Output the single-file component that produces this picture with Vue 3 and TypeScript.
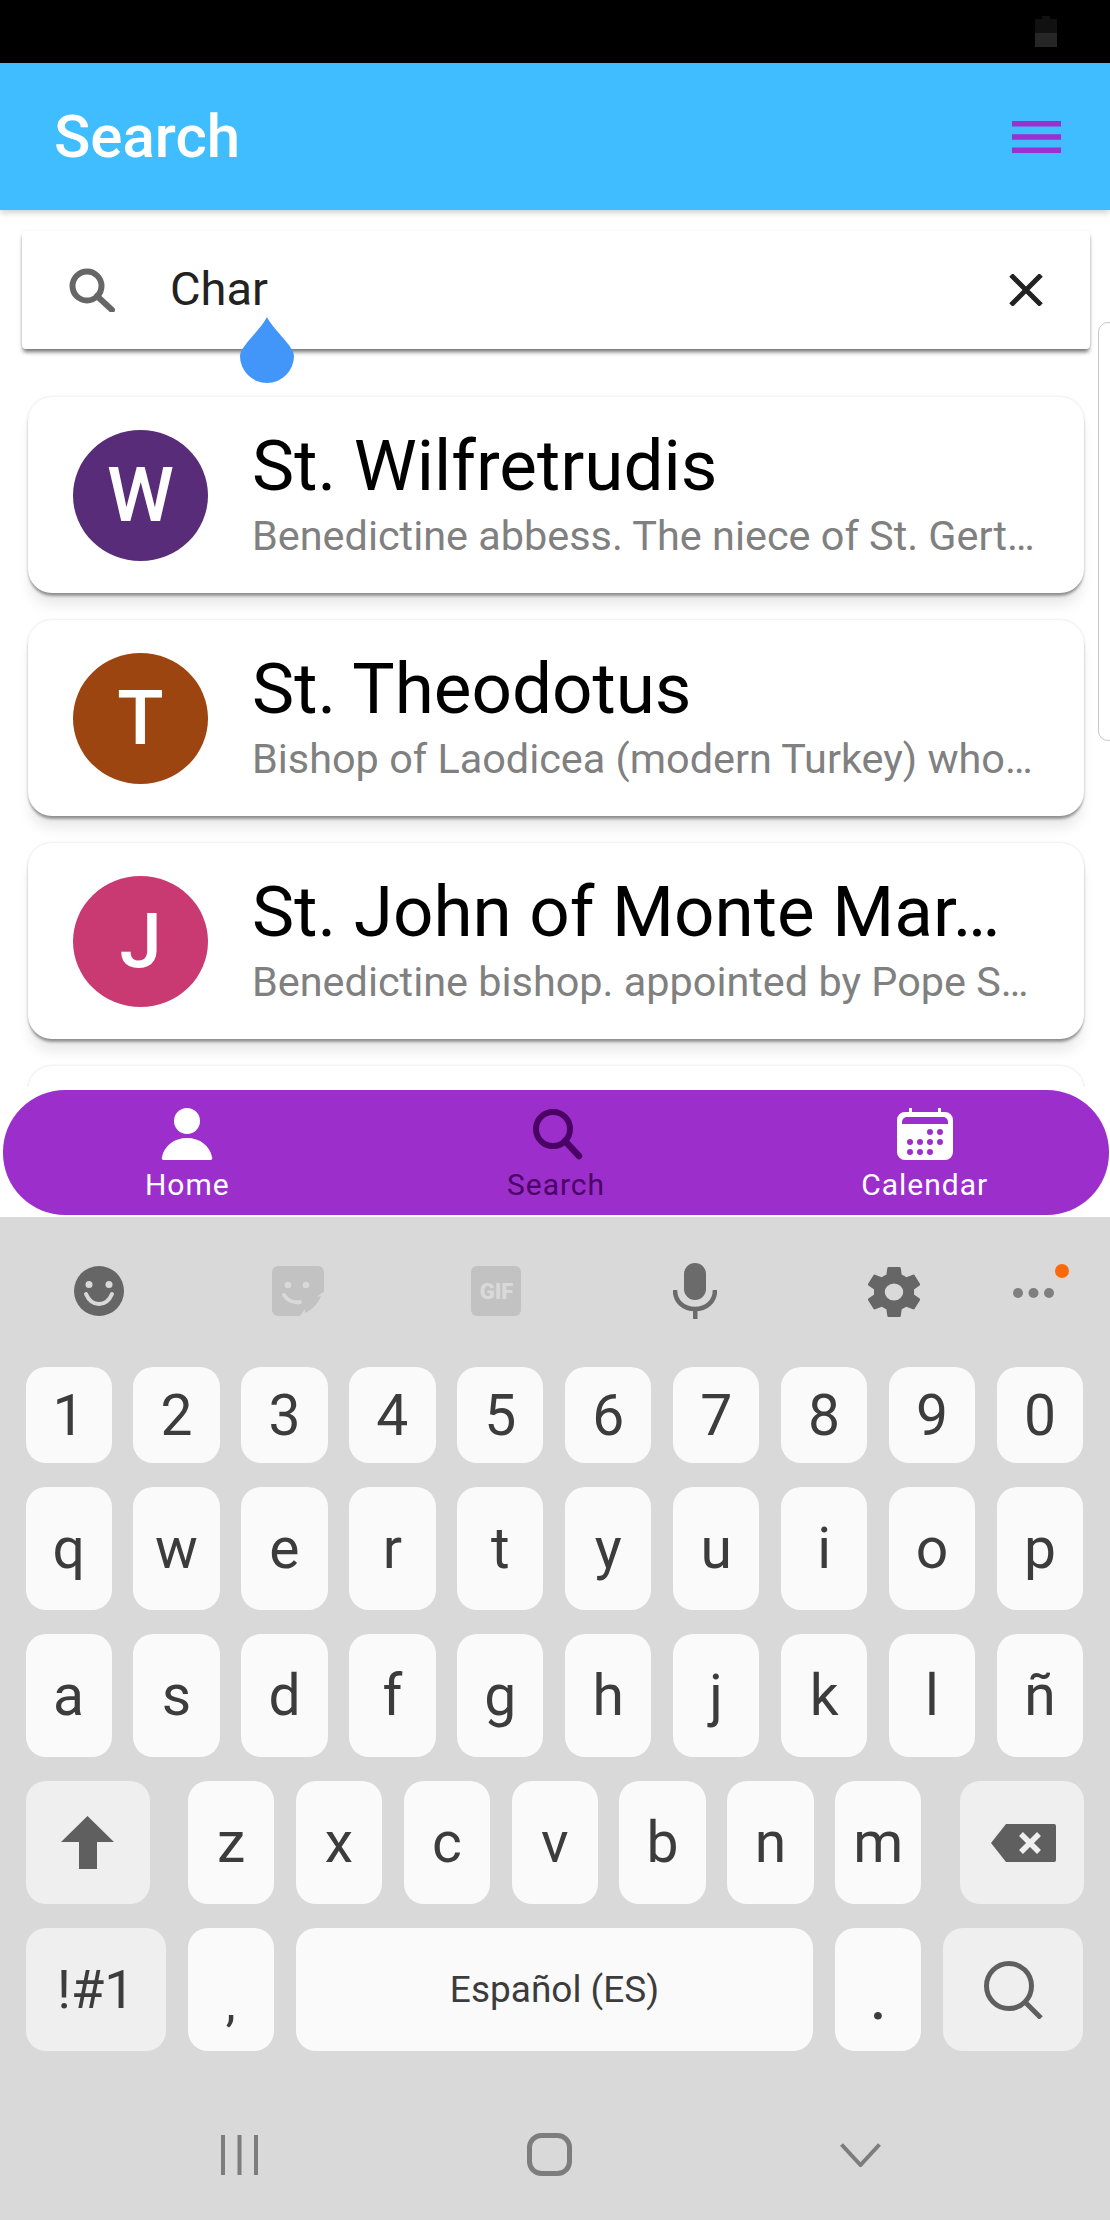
<script setup lang="ts">
interface Saint { letter: string; name: string; text: string; color: string }
const saints: Saint[] = [
  { letter: 'W', name: 'St. Wilfretrudis', text: 'Benedictine abbess. The niece of St. Gert…', color: '#582c78' },
  { letter: 'T', name: 'St. Theodotus', text: 'Bishop of Laodicea (modern Turkey) who…', color: '#9c4510' },
  { letter: 'J', name: 'St. John of Monte Mar…', text: 'Benedictine bishop. appointed by Pope S…', color: '#c93a73' },
]
const digits = '1234567890'.split('')
const row2 = 'qwertyuiop'.split('')
const row3 = 'asdfghjklñ'.split('')
const row4 = 'zxcvbnm'.split('')
const calDots: [number, number][] = [
  [33, 24], [43, 24], [13, 34], [23, 34], [33, 34], [43, 34], [13, 44], [23, 44], [33, 44],
]
</script>

<template>
  <div class="page">
    <div class="status">
      <svg class="battery" viewBox="0 0 22 31"><path d="M7 0h8v3h7v28H0V3h7z" fill="#111" /><rect y="17" width="22" height="14" fill="#262626" /></svg>
    </div>
    <header class="appbar">
      <span class="appbar-title">Search</span>
      <svg class="menu" viewBox="0 0 49 32"><rect y="0" width="49" height="5.500" fill="#9b30d0" /><rect y="13.250" width="49" height="5.500" fill="#9b30d0" /><rect y="26.500" width="49" height="5.500" fill="#9b30d0" /></svg>
    </header>

    <main class="content">
      <div class="searchbox">
        <svg class="s-icon" viewBox="0 0 46 44"><circle cx="18" cy="18" r="14.500" fill="none" stroke="#666" stroke-width="6" /><path d="M28 28l15 14" stroke="#666" stroke-width="6" fill="none" stroke-linecap="round" /></svg>
        <span class="s-text">Char</span>
        <svg class="s-close" viewBox="0 0 36 32"><path d="M3 1l30 30M33 1L3 31" stroke="#222" stroke-width="5" fill="none" /></svg>
      </div>

      <div class="scroll">
        <div class="list">
          <article v-for="s in saints" :key="s.letter" class="card">
            <div class="avatar" :style="{ background: s.color }">{{ s.letter }}</div>
            <div class="card-body">
              <div class="card-title">{{ s.name }}</div>
              <div class="card-sub">{{ s.text }}</div>
            </div>
          </article>
          <article class="card"></article>
        </div>
      </div>

      <svg class="drop" viewBox="0 0 54 66"><path d="M27 0C34 14 54 29 54 39A27 27 0 0 1 0 39C0 29 20 14 27 0Z" fill="#4295f9" /></svg>
      <div class="edge"></div>

      <nav class="nav">
        <div class="nav-item">
          <svg class="nav-icon" viewBox="0 0 56 52"><circle cx="28" cy="13" r="13" fill="#fff" /><path d="M5 52a2 2 0 0 1-2-3C5 38 15 30 28 30s23 8 25 19a2 2 0 0 1-2 3z" fill="#fff" /></svg>
          <span class="nav-label">Home</span>
        </div>
        <div class="nav-item nav-active">
          <svg class="nav-icon" viewBox="0 0 56 52"><circle cx="25" cy="21" r="17" fill="none" stroke="#4b0066" stroke-width="6" /><path d="M37 33l14 15" stroke="#4b0066" stroke-width="6.500" stroke-linecap="round" fill="none" /></svg>
          <span class="nav-label">Search</span>
        </div>
        <div class="nav-item">
          <svg class="nav-icon" viewBox="0 0 56 52">
            <path d="M12 0h3v4h26V0h3v4h4a8 8 0 0 1 8 8v32a8 8 0 0 1-8 8H8a8 8 0 0 1-8-8V12a8 8 0 0 1 8-8h4z" fill="#fff" />
            <path d="M5 14a5 5 0 0 1 5-5h36a5 5 0 0 1 5 5v2H5z" fill="#9c2fcc" />
            <circle v-for="d in calDots" :key="d[0] + '-' + d[1]" :cx="d[0]" :cy="d[1]" r="3" fill="#9c2fcc" />
          </svg>
          <span class="nav-label">Calendar</span>
        </div>
      </nav>
    </main>

    <section class="keyboard">
      <div class="toolbar">
        <div class="slot">
          <svg class="tb-icon" viewBox="0 0 52 50"><circle cx="26" cy="25" r="25" fill="#666" /><circle cx="16" cy="18.500" r="3.500" fill="#d9d9d9" /><circle cx="36" cy="18.500" r="3.500" fill="#d9d9d9" /><path d="M13 28c3 7 8 10 13 10s10-3 13-10" stroke="#d9d9d9" stroke-width="4" stroke-linecap="round" fill="none" /></svg>
        </div>
        <div class="slot">
          <svg class="tb-icon" viewBox="0 0 52 50">
            <path d="M6 0h40a6 6 0 0 1 6 6v20C50 26 36 38 28 50H6a6 6 0 0 1-6-6V6a6 6 0 0 1 6-6z" fill="#c2c2c2" />
            <circle cx="16" cy="19" r="3.300" fill="#d9d9d9" /><circle cx="34" cy="19" r="3.300" fill="#d9d9d9" />
            <path d="M12 29c4 6 9 8 16 7" stroke="#d9d9d9" stroke-width="4" stroke-linecap="round" fill="none" />
            <path d="M33 47c-1-9 6-16 16-17-3 8-8 13-16 17z" fill="#c2c2c2" />
          </svg>
        </div>
        <div class="slot">
          <div class="gif">GIF</div>
        </div>
        <div class="slot">
          <svg class="tb-mic" viewBox="0 0 44 56"><rect x="11" y="0" width="22" height="37" rx="11" fill="#6b6b6b" /><path d="M2 27c0 12 9 19 20 19s20-7 20-19" stroke="#6b6b6b" stroke-width="4.500" fill="none" /><rect x="20" y="45" width="4.500" height="11" fill="#6b6b6b" /></svg>
        </div>
        <div class="slot">
          <svg class="tb-gear" viewBox="2.700 2 18.600 20" preserveAspectRatio="none"><path fill-rule="evenodd" d="M19.140 12.940a7.600 7.600 0 0 0 0-1.880l2.030-1.580a.5.5 0 0 0 .12-.61l-1.920-3.320a.5.5 0 0 0-.59-.22l-2.390.96a7.300 7.300 0 0 0-1.620-.94l-.36-2.540a.48.48 0 0 0-.48-.41h-3.840a.48.48 0 0 0-.47.41l-.36 2.540a7.300 7.300 0 0 0-1.630.94l-2.390-.96a.49.49 0 0 0-.59.22L2.740 8.870a.48.48 0 0 0 .12.61l2.030 1.580a7.600 7.600 0 0 0 0 1.880l-2.030 1.580a.5.5 0 0 0-.12.61l1.920 3.320c.12.22.37.29.59.22l2.390-.96c.5.380 1.030.70 1.620.94l.36 2.540c.05.24.24.41.48.41h3.840c.24 0 .44-.17.47-.41l.36-2.540a7.300 7.300 0 0 0 1.620-.94l2.390.96c.22.080.47 0 .59-.22l1.920-3.320a.48.48 0 0 0-.12-.61zM12 15.300a3.300 3.300 0 1 1 0-6.600 3.300 3.300 0 0 1 0 6.600z" fill="#666" /></svg>
        </div>
        <div class="slot slot-dots">
          <svg class="tb-dots" viewBox="0 0 56 40"><circle cx="5" cy="29" r="5" fill="#7f7f7f" /><circle cx="20.500" cy="29" r="5" fill="#7f7f7f" /><circle cx="36" cy="29" r="5" fill="#7f7f7f" /><circle cx="49" cy="7" r="7" fill="#fb6a0a" /></svg>
        </div>
      </div>

      <div class="rows">
        <div class="row row-digits"><div v-for="k in digits" :key="k" class="key">{{ k }}</div></div>
        <div class="row"><div v-for="k in row2" :key="k" class="key">{{ k }}</div></div>
        <div class="row"><div v-for="k in row3" :key="k" class="key">{{ k }}</div></div>
        <div class="row">
          <div class="key fn wide-shift">
            <svg class="shift" viewBox="0 0 53 53"><path d="M26.500 0L53 26H36v27H18V26H0z" fill="#5f5f5f" /></svg>
          </div>
          <div v-for="k in row4" :key="k" class="key fixed">{{ k }}</div>
          <div class="key fn wide-back">
            <svg class="back" viewBox="0 0 65 38"><path d="M15 0h48a2 2 0 0 1 2 2v34a2 2 0 0 1-2 2H15L0 19z" fill="#5f5f5f" /><path d="M30 10l18 18M48 10L30 28" stroke="#efefef" stroke-width="5.500" fill="none" /></svg>
          </div>
        </div>
        <div class="row">
          <div class="key fn sym">!#1</div>
          <div class="key fixed comma">,</div>
          <div class="key space">Español (ES)</div>
          <div class="key fixed period">.</div>
          <div class="key fn go">
            <svg class="go-icon" viewBox="0 0 60 58"><circle cx="26" cy="25" r="22.500" fill="none" stroke="#5f5f5f" stroke-width="5" /><path d="M42 41l16 16" stroke="#5f5f5f" stroke-width="5" fill="none" /></svg>
          </div>
        </div>
      </div>

      <div class="sysnav">
        <svg class="sys-recent" viewBox="0 0 37 40"><path d="M2 0v40M18.500 0v40M35 0v40" stroke="#7d7d7d" stroke-width="4" fill="none" /></svg>
        <svg class="sys-home" viewBox="0 0 45 43"><rect x="2.500" y="2.500" width="40" height="38" rx="12" fill="none" stroke="#7d7d7d" stroke-width="5" /></svg>
        <svg class="sys-back" viewBox="0 0 41 24"><path d="M1.500 1.500L20.500 22 39.500 1.500" stroke="#7d7d7d" stroke-width="4" fill="none" /></svg>
      </div>
    </section>
  </div>
</template>

<style>
html, body { margin: 0; background: #fff; }
</style>

<style scoped>
.page {
  width: 1110px;
  height: 2220px;
  display: flex;
  flex-direction: column;
  overflow: hidden;
  font-family: Roboto, "Liberation Sans", sans-serif;
  background: #fff;
}
.status {
  height: 63px;
  flex: none;
  background: #000;
  display: flex;
  justify-content: flex-end;
  align-items: flex-start;
  padding: 16px 53px 0 0;
  box-sizing: border-box;
}
.battery { width: 22px; height: 31px; }
.appbar {
  height: 147px;
  flex: none;
  background: #40bdff;
  display: flex;
  align-items: center;
  justify-content: space-between;
  padding: 0 49px 0 54px;
  box-sizing: border-box;
  box-shadow: 0 3px 6px rgba(0, 0, 0, 0.18);
  position: relative;
  z-index: 2;
}
.appbar-title { color: #fff; font-size: 60px; font-weight: 500; }
.menu { width: 49px; height: 32px; }

.content {
  height: 1007px;
  flex: none;
  position: relative;
  overflow: hidden;
  background: #fff;
}
.searchbox {
  margin: 21px 20px 0 22px;
  height: 118px;
  background: #fff;
  border-radius: 4px;
  box-shadow: 0 4px 4px -1px rgba(0, 0, 0, 0.55), 0 0 3px rgba(0, 0, 0, 0.06);
  display: flex;
  align-items: center;
  padding: 0 46px 0 47px;
  box-sizing: border-box;
  position: relative;
  z-index: 1;
}
.s-icon { width: 46px; height: 44px; margin-right: 56px; flex: none; }
.s-text { flex: 1; font-size: 47px; color: #222; margin-top: -4px; margin-left: -1px; }
.s-close { width: 36px; height: 32px; flex: none; }

.scroll {
  height: 738px;
  overflow: hidden;
  padding-top: 48px;
  box-sizing: border-box;
}
.list {
  margin: 0 26px 0 28px;
  display: flex;
  flex-direction: column;
  gap: 27px;
}
.card {
  height: 196px;
  flex: none;
  background: #fff;
  border-radius: 24px;
  display: flex;
  align-items: center;
  padding: 0 45px;
  box-sizing: border-box;
  box-shadow: 0 4px 3px -1px rgba(0, 0, 0, 0.36), 0 0 3px rgba(0, 0, 0, 0.14), 0 14px 14px -2px rgba(0, 0, 0, 0.09);
}
.avatar {
  width: 135px;
  height: 131px;
  border-radius: 50%;
  flex: none;
  color: #fff;
  font-size: 76px;
  font-weight: 500;
  display: flex;
  align-items: center;
  justify-content: center;
  margin-right: 44px;
}
.card-body { min-width: 0; flex: 1; margin-top: -4px; }
.card-title {
  font-size: 71px;
  line-height: 78px;
  color: #000;
  white-space: nowrap;
}
.card-sub {
  font-size: 41.400px;
  line-height: 46px;
  margin-top: 8px;
  color: #808080;
  white-space: nowrap;
}
.drop { position: absolute; left: 240px; top: 107px; width: 54px; height: 66px; z-index: 2; }
.edge {
  position: absolute;
  left: 1098px;
  top: 112px;
  width: 20px;
  height: 419px;
  border: 1px solid #c8c8c8;
  border-radius: 14px;
  box-sizing: border-box;
  background: #fff;
}
.nav {
  position: absolute;
  left: 3px;
  top: 880px;
  width: 1106px;
  height: 125px;
  border-radius: 62px;
  background: #9c2fcc;
  display: grid;
  grid-template-columns: repeat(3, 1fr);
}
.nav-item {
  display: flex;
  flex-direction: column;
  align-items: center;
  padding-top: 18px;
  color: #fff;
}
.nav-active { color: #4b0066; }
.nav-icon { width: 56px; height: 52px; flex: none; }
.nav-label { font-size: 30px; line-height: 34px; margin-top: 8px; letter-spacing: 1px; }

.keyboard {
  flex: 1;
  background: #d9d9d9;
  display: flex;
  flex-direction: column;
}
.toolbar { height: 148px; display: flex; flex: none; }
.slot {
  width: 198.600px;
  flex: none;
  display: flex;
  align-items: flex-start;
  justify-content: center;
  padding-top: 49px;
  box-sizing: border-box;
}
.slot-dots { width: 82px; padding-top: 47px; }
.tb-icon { width: 52px; height: 50px; }
.tb-gear { width: 52px; height: 52px; }
.tb-mic { width: 44px; height: 56px; margin-top: -3px; }
.tb-dots { width: 56px; height: 40px; margin-left: 14px; }
.gif {
  width: 50px;
  height: 50px;
  border-radius: 6px;
  background: #c2c2c2;
  color: #d9d9d9;
  font-size: 22px;
  font-weight: 900;
  display: flex;
  align-items: center;
  justify-content: center;
}
.rows {
  display: flex;
  flex-direction: column;
  gap: 24px;
  padding: 2px 27px 0 25.500px;
}
.row { display: flex; gap: 21.700px; height: 123px; }
.row-digits { height: 96px; }
.key {
  flex: 1 1 0;
  min-width: 0;
  background: #fafafa;
  border-radius: 20px;
  color: #3c3c3c;
  font-size: 57px;
  display: flex;
  align-items: center;
  justify-content: center;
}
.fixed { flex: 0 0 86.200px; }
.fn { background: #efefef; }
.wide-shift { flex: 0 0 124.500px; margin-right: 16.300px; }
.wide-back { flex: 0 0 123.500px; margin-left: 17.300px; }
.sym { flex: 0 0 140.500px; font-size: 54px; }
.space { flex: 1 1 0; font-size: 37px; }
.go { flex: 0 0 140px; }
.comma { padding-top: 26px; box-sizing: border-box; font-size: 50px; }
.period { padding-top: 20px; box-sizing: border-box; font-weight: 500; }
.shift { width: 53px; height: 53px; }
.back { width: 65px; height: 38px; margin-left: 2px; }
.go-icon { width: 60px; height: 58px; }
.sysnav {
  flex: 1;
  display: flex;
  align-items: flex-start;
  padding-left: 221px;
}
.sys-recent { width: 37px; height: 40px; margin-top: 84px; flex: none; }
.sys-home { width: 45px; height: 43px; margin: 82px 0 0 269px; flex: none; }
.sys-back { width: 41px; height: 24px; margin: 92px 0 0 268px; flex: none; }
</style>
